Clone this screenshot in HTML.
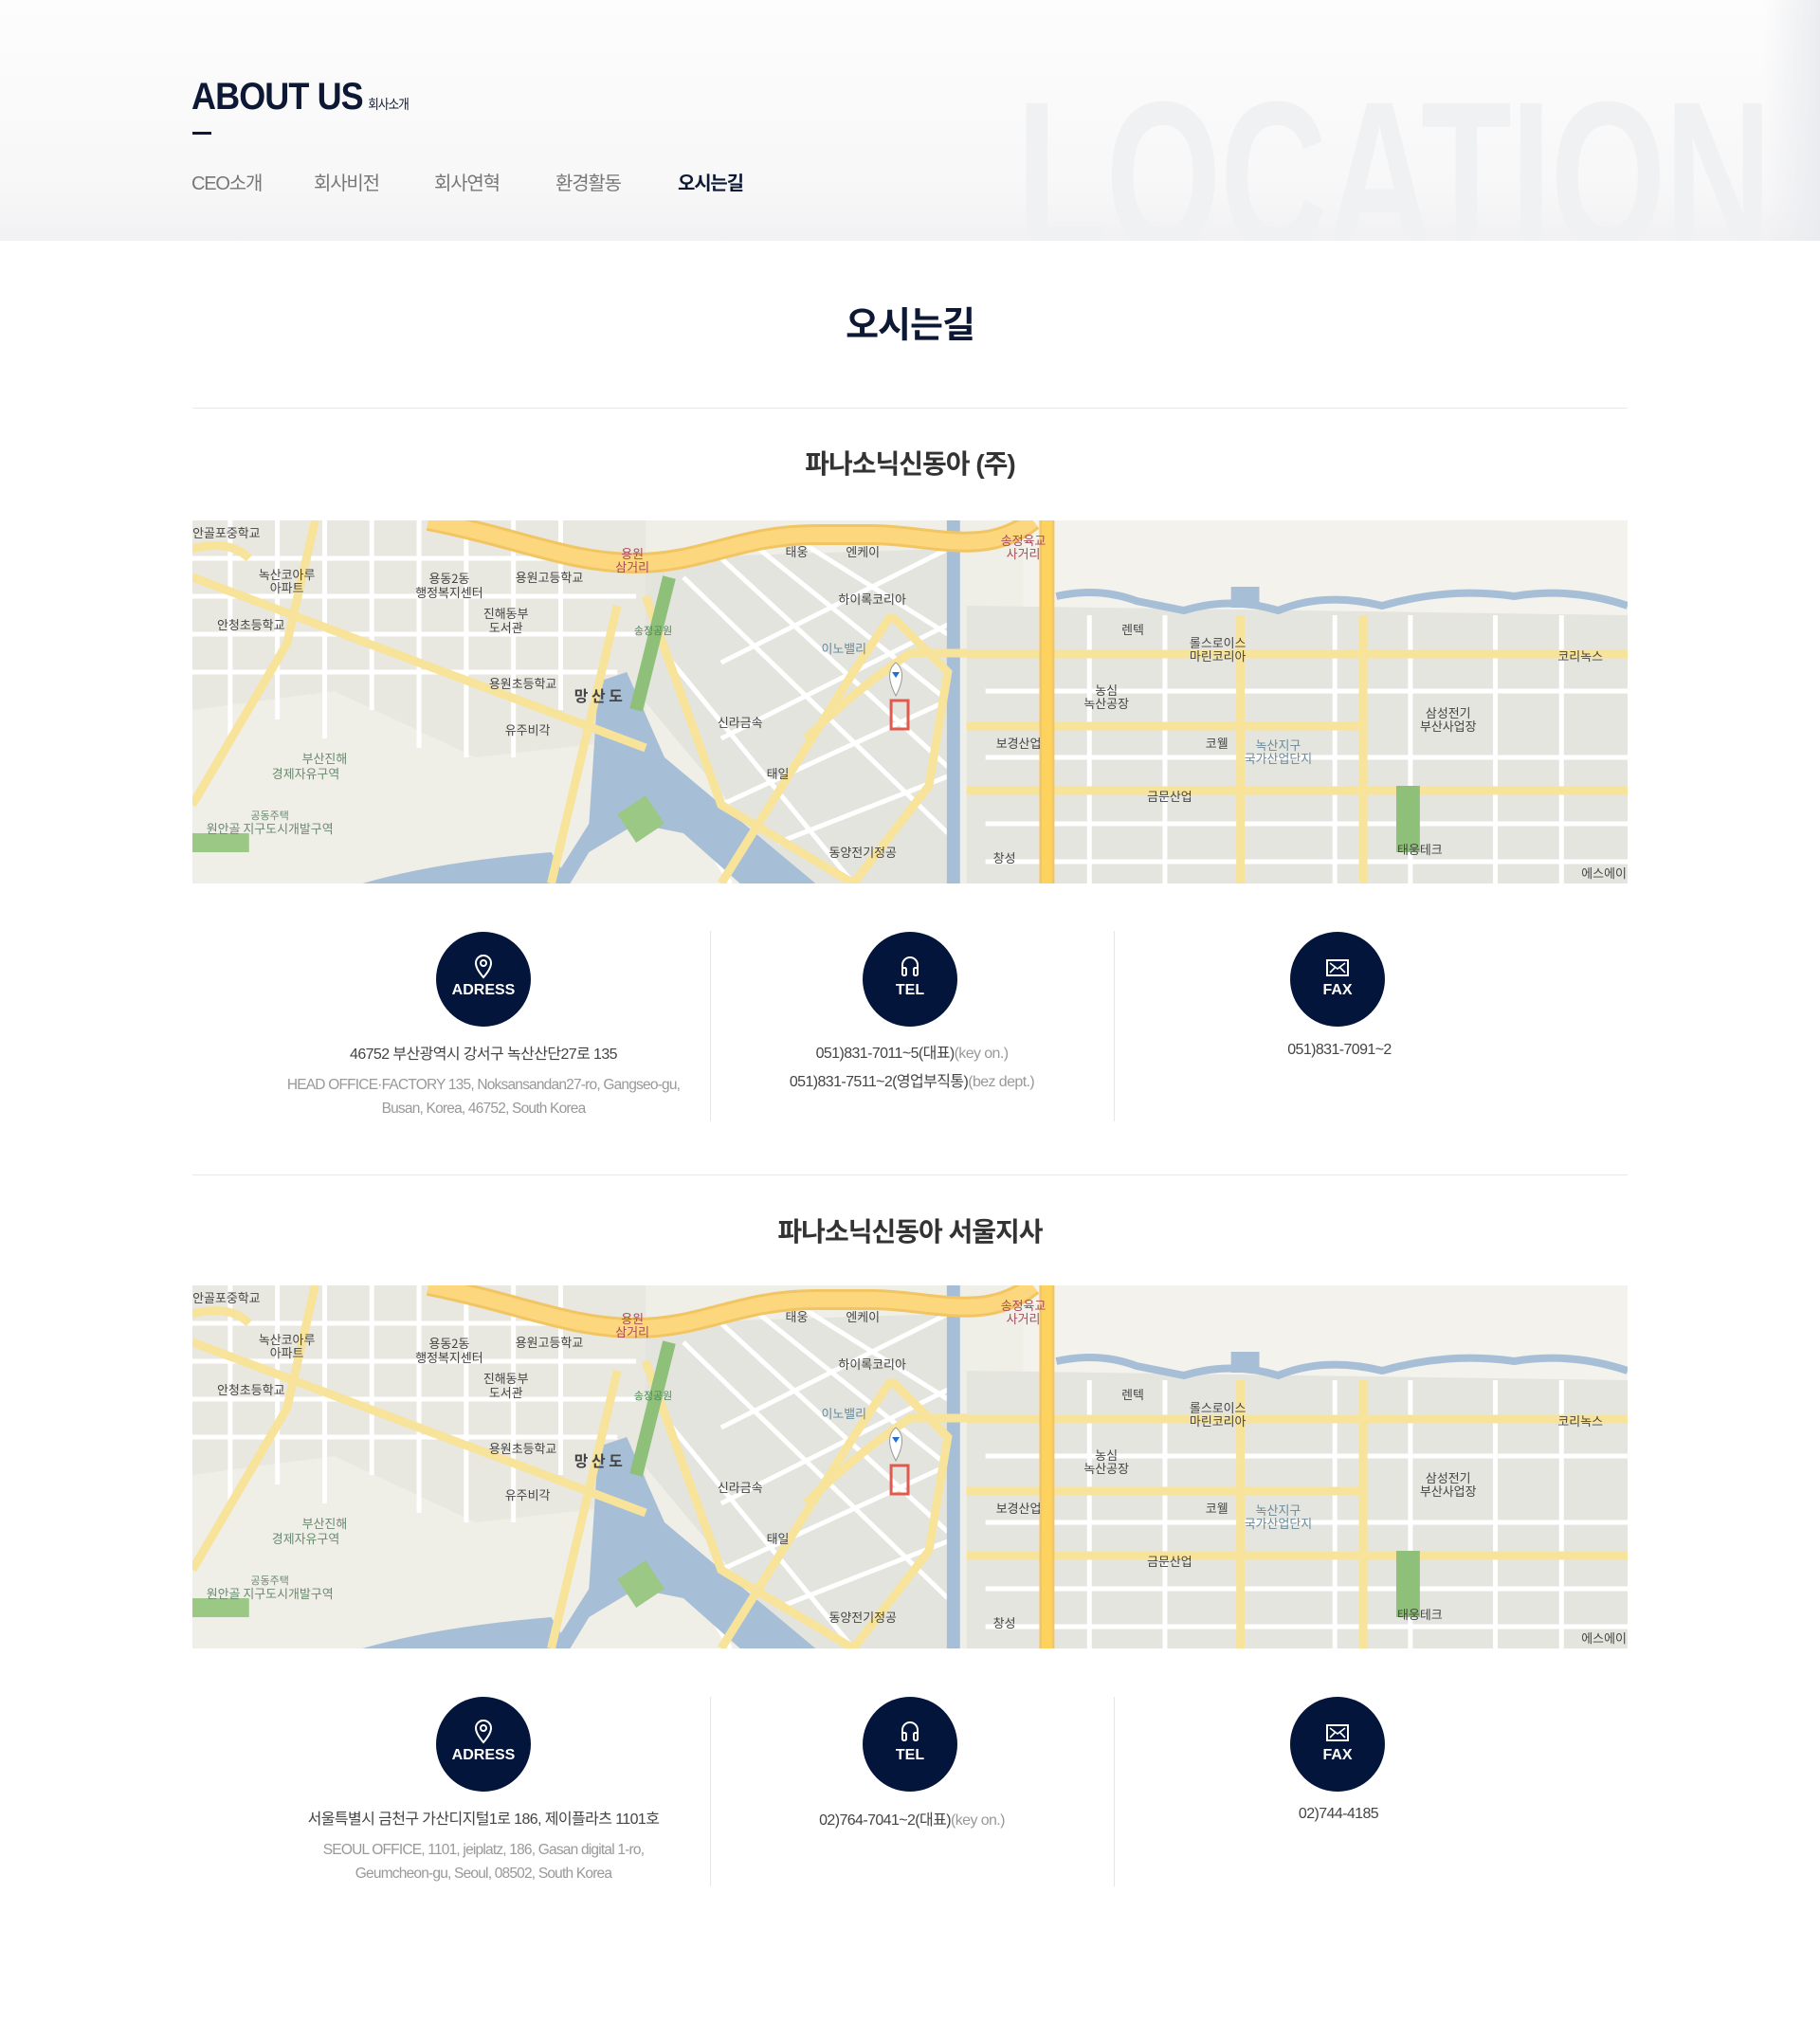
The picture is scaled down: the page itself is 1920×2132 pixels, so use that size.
<!DOCTYPE html>
<html><head><meta charset="utf-8"><style>
*{margin:0;padding:0;box-sizing:border-box}
body{width:1920px;height:2132px;background:#fff;position:relative;overflow:hidden;font-family:"Liberation Sans","Noto Sans CJK KR",sans-serif;color:#222}
.a{position:absolute}
.band{left:0;top:0;width:1920px;height:254px;background:linear-gradient(180deg,#fdfdfd 0%,#f7f7f8 80%,#f1f1f3 100%);overflow:hidden}
.band:after{content:"";position:absolute;right:0;top:0;width:60px;height:254px;background:linear-gradient(90deg,rgba(230,231,235,0),#ebecef)}
.loc{left:1072px;top:74px;font:bold 224px/1 "Liberation Sans",sans-serif;color:#f0f1f3;letter-spacing:-2px;white-space:nowrap;transform:scaleX(.7);transform-origin:left top}
.about{left:202px;top:82px;font:bold 40px/1 "Liberation Sans",sans-serif;color:#0d1834;letter-spacing:-1px;transform:scaleX(.9);transform-origin:left top;white-space:nowrap}
.about small{font:14px "Noto Sans CJK KR",sans-serif;letter-spacing:-1px;margin-left:6px}
.dash{left:203px;top:139px;width:20px;height:3px;background:#0d1834}
.nav{top:177px;font-size:20px;color:#777;letter-spacing:-1.2px}
.t1{left:0;width:1920px;text-align:center;top:312px;font-size:38px;font-weight:bold;color:#0d1834;letter-spacing:-1px}
.hr{left:203px;width:1514px;height:1px;background:#e8e8e8}
.t2{left:0;width:1920px;text-align:center;font-size:28px;font-weight:bold;color:#333;letter-spacing:-1px}
.map{left:203px;width:1514px;height:383px}
.circ{width:100px;height:100px;border-radius:50%;background:#03153a;color:#fff;text-align:center;font:bold 16px "Liberation Sans",sans-serif}
.circ svg{position:absolute;left:38px;top:24px}
.circ span{position:absolute;left:0;width:100px;top:53px}
.vl{width:1px;background:#e3e6ea}
.tx{text-align:center;font-size:16px;color:#444;letter-spacing:-.6px;white-space:nowrap}
.tx i{font-style:normal;color:#999}
.sub{text-align:center;font-size:15.5px;color:#999;letter-spacing:-.8px;line-height:25px}
</style></head><body>
<svg width="0" height="0" style="position:absolute">
<defs>
<symbol id="m" viewBox="0 0 1520 383">
<rect width="1520" height="383" fill="#efeee7"/>
<path d="M880 0H1520V100H880Z" fill="#f3f2ec"/>
<path d="M480 40 L800 30 L800 383 L640 383 L470 180Z" fill="#e3e4de"/>
<path d="M820 90 L1520 100 L1520 383 L820 383Z" fill="#e4e5df"/>
<path d="M0 0H480V230L300 250 L150 180 L0 200Z" fill="#e8e7e0"/>
<g stroke="#fff" stroke-width="5" fill="none">
<path d="M0 40H460M0 80H470M0 120H470M0 160H450M40 0V230M90 0V210M140 0V230M190 0V200M240 0V240M290 0V250M340 0V250M390 0V200"/>
<path d="M520 60L800 330M560 40L800 260M600 30L800 190M640 20L800 120M500 140L700 383M490 250L570 383M560 150L800 30M560 230L800 110M560 300L800 190M620 340L800 270M840 180H1520M840 250H1520M840 320H1520M840 360H1520M950 100V383M1030 100V383M1110 100V383M1210 100V383M1290 100V383M1380 100V383M1450 100V383"/>
</g>
<path d="M380 383 L420 320 L430 170 L460 160 L500 250 L560 300 L660 383 L580 383 L520 330 L470 320 L420 350 L400 383Z" fill="#a7bed7"/>
<path d="M180 383 Q260 360 380 350 L400 383Z" fill="#a7bed7"/>
<path d="M806 0 L806 383" stroke="#a7bed7" stroke-width="14"/>
<path d="M915 80 Q960 70 1000 85 L1050 95 Q1100 80 1150 95 Q1200 75 1260 90 Q1330 70 1400 80 Q1460 70 1520 90" stroke="#a7bed7" stroke-width="8" fill="none"/>
<path d="M1100 70h30v22h-30z" fill="#a7bed7"/>
<g stroke="#f8e39b" stroke-width="9" fill="none">
<path d="M0 60 L480 240 M130 0 L100 130 L0 300 M450 90 L380 383 M480 80 L560 300 L700 383 M740 100 L700 160 L560 383 M740 100 L800 160 L780 280 L700 383 M820 141H1520 M820 217H1240 M820 285H1520 M1110 100V383 M1240 100V383 M0 30 Q40 20 60 40"/>
<path d="M650 230 Q700 180 760 140 H820"/>
</g>
<path d="M250 0 C350 20 400 45 470 45 C540 45 580 15 660 15 L720 15 C780 15 840 40 890 0" stroke="#f2c563" stroke-width="22" fill="none"/>
<path d="M250 0 C350 20 400 45 470 45 C540 45 580 15 660 15 L720 15 C780 15 840 40 890 0" stroke="#fcd77e" stroke-width="16" fill="none"/>
<path d="M905 0V383" stroke="#f2c563" stroke-width="16"/><path d="M905 0V383" stroke="#fdd35e" stroke-width="11"/>
<path d="M505 60 L470 200" stroke="#8fc07a" stroke-width="14"/>
<path d="M1275 280h25v70h-25z" fill="#8fc07a"/>
<path d="M450 310 l30 -20 l20 30 l-30 20z" fill="#9cc886"/>
<path d="M0 330h60v20H0z" fill="#9cc886"/>
<rect x="740" y="190" width="18" height="30" fill="none" stroke="#e25a4e" stroke-width="3"/>
<path d="M745 185 Q732 160 745 150 Q758 160 745 185Z" fill="#fff" stroke="#999"/>
<path d="M741 160h8l-4 6z" fill="#1f6fd0"/>
<g font-family="Noto Sans CJK KR,sans-serif" font-size="13" fill="#444" text-anchor="middle">
<text x="36" y="18">안골포중학교</text><text x="100" y="62">녹산코아루</text><text x="100" y="76">아파트</text>
<text x="62" y="115">안청초등학교</text><text x="272" y="66">용동2동</text><text x="272" y="81">행정복지센터</text>
<text x="378" y="65">용원고등학교</text><text x="332" y="103">진해동부</text><text x="332" y="118">도서관</text>
<text x="350" y="177">용원초등학교</text><text x="430" y="191" font-size="16" font-weight="bold">망 산 도</text>
<text x="355" y="226">유주비각</text><text x="140" y="256" fill="#6a8a70">부산진해</text><text x="120" y="272" fill="#6a8a70">경제자유구역</text>
<text x="82" y="315" font-size="11" fill="#6a8a70">공동주택</text><text x="82" y="330" fill="#6a8a70">원안골 지구도시개발구역</text>
<text x="466" y="40" fill="#a84a5a">용원</text><text x="466" y="54" fill="#a84a5a">삼거리</text>
<text x="640" y="38">태웅</text><text x="710" y="38">엔케이</text><text x="720" y="88">하이록코리아</text>
<text x="690" y="140" fill="#6a8a9a">이노밸리</text><text x="488" y="120" font-size="11" fill="#4a8a50">송정공원</text>
<text x="580" y="218">신라금속</text><text x="620" y="272">태일</text><text x="710" y="355">동양전기정공</text>
<text x="880" y="26" fill="#a84a5a">송정육교</text><text x="880" y="40" fill="#a84a5a">사거리</text>
<text x="996" y="120">렌텍</text><text x="1086" y="134">롤스로이스</text><text x="1086" y="148">마린코리아</text>
<text x="1470" y="148">코리녹스</text><text x="968" y="184">농심</text><text x="968" y="198">녹산공장</text>
<text x="1330" y="208">삼성전기</text><text x="1330" y="222">부산사업장</text><text x="875" y="240">보경산업</text>
<text x="1085" y="240">코웰</text><text x="1150" y="242" fill="#6a8a9a">녹산지구</text><text x="1150" y="256" fill="#6a8a9a">국가산업단지</text>
<text x="1035" y="296">금문산업</text><text x="1300" y="352">태웅테크</text><text x="860" y="361">창성</text><text x="1495" y="377">에스에이</text>
</g>
</symbol>
</defs></svg>

<div class="a band"><div class="a loc">LOCATION</div></div>
<div class="a about">ABOUT US<small>회사소개</small></div>
<div class="a dash"></div>
<div class="a nav" style="left:202px">CEO소개</div>
<div class="a nav" style="left:331px">회사비전</div>
<div class="a nav" style="left:458px">회사연혁</div>
<div class="a nav" style="left:586px">환경활동</div>
<div class="a nav" style="left:715px;color:#0d1834;font-weight:bold">오시는길</div>

<div class="a t1">오시는길</div>
<div class="a hr" style="top:430px"></div>
<div class="a t2" style="top:468px">파나소닉신동아 (주)</div>
<svg class="a map" style="top:549px" viewBox="0 0 1520 383" preserveAspectRatio="none"><use href="#m"/></svg>

<div class="a vl" style="left:749px;top:982px;height:201px"></div>
<div class="a vl" style="left:1175px;top:982px;height:201px"></div>
<div class="a circ" style="left:460px;top:983px"><svg width="24" height="26" viewBox="0 0 24 26"><path d="M12 24 C5 16 4 12 4 9 A8 8 0 0 1 20 9 C20 12 19 16 12 24Z" fill="none" stroke="#fff" stroke-width="2"/><circle cx="12" cy="9" r="3" fill="none" stroke="#fff" stroke-width="2"/></svg><span>ADRESS</span></div>
<div class="a circ" style="left:910px;top:983px"><svg width="24" height="26" viewBox="0 0 24 26"><path d="M4 20V11A8 8 0 0 1 20 11V20" fill="none" stroke="#fff" stroke-width="2"/><rect x="4" y="14" width="4" height="8" rx="1.5" fill="none" stroke="#fff" stroke-width="2"/><rect x="16" y="14" width="4" height="8" rx="1.5" fill="none" stroke="#fff" stroke-width="2"/></svg><span>TEL</span></div>
<div class="a circ" style="left:1361px;top:983px"><svg width="24" height="26" viewBox="0 0 24 26"><rect x="1" y="6" width="22" height="16" fill="none" stroke="#fff" stroke-width="2"/><path d="M4 9L12 15L20 9M4 19L10 13M20 19L14 13" fill="none" stroke="#fff" stroke-width="1.6"/></svg><span>FAX</span></div>

<div class="a tx" style="left:203px;width:614px;top:1098px">46752 부산광역시 강서구 녹산산단27로 135</div>
<div class="a sub" style="left:203px;width:614px;top:1132px">HEAD OFFICE·FACTORY 135, Noksansandan27-ro, Gangseo-gu,<br>Busan, Korea, 46752, South Korea</div>
<div class="a tx" style="left:749px;width:426px;top:1097px;line-height:30px">051)831-7011~5(대표)<i>(key on.)</i><br>051)831-7511~2(영업부직통)<i>(bez dept.)</i></div>
<div class="a tx" style="left:1175px;width:476px;top:1099px">051)831-7091~2</div>

<div class="a hr" style="top:1239px"></div>
<div class="a t2" style="top:1278px">파나소닉신동아 서울지사</div>
<svg class="a map" style="top:1356px" viewBox="0 0 1520 383" preserveAspectRatio="none"><use href="#m"/></svg>

<div class="a vl" style="left:749px;top:1790px;height:200px"></div>
<div class="a vl" style="left:1175px;top:1790px;height:200px"></div>
<div class="a circ" style="left:460px;top:1790px"><svg width="24" height="26" viewBox="0 0 24 26"><path d="M12 24 C5 16 4 12 4 9 A8 8 0 0 1 20 9 C20 12 19 16 12 24Z" fill="none" stroke="#fff" stroke-width="2"/><circle cx="12" cy="9" r="3" fill="none" stroke="#fff" stroke-width="2"/></svg><span>ADRESS</span></div>
<div class="a circ" style="left:910px;top:1790px"><svg width="24" height="26" viewBox="0 0 24 26"><path d="M4 20V11A8 8 0 0 1 20 11V20" fill="none" stroke="#fff" stroke-width="2"/><rect x="4" y="14" width="4" height="8" rx="1.5" fill="none" stroke="#fff" stroke-width="2"/><rect x="16" y="14" width="4" height="8" rx="1.5" fill="none" stroke="#fff" stroke-width="2"/></svg><span>TEL</span></div>
<div class="a circ" style="left:1361px;top:1790px"><svg width="24" height="26" viewBox="0 0 24 26"><rect x="1" y="6" width="22" height="16" fill="none" stroke="#fff" stroke-width="2"/><path d="M4 9L12 15L20 9M4 19L10 13M20 19L14 13" fill="none" stroke="#fff" stroke-width="1.6"/></svg><span>FAX</span></div>

<div class="a tx" style="left:203px;width:614px;top:1905px">서울특별시 금천구 가산디지털1로 186, 제이플라츠 1101호</div>
<div class="a sub" style="left:203px;width:614px;top:1939px">SEOUL OFFICE, 1101, jeiplatz, 186, Gasan digital 1-ro,<br>Geumcheon-gu, Seoul, 08502, South Korea</div>
<div class="a tx" style="left:749px;width:426px;top:1906px">02)764-7041~2(대표)<i>(key on.)</i></div>
<div class="a tx" style="left:1175px;width:474px;top:1905px">02)744-4185</div>
</body></html>
